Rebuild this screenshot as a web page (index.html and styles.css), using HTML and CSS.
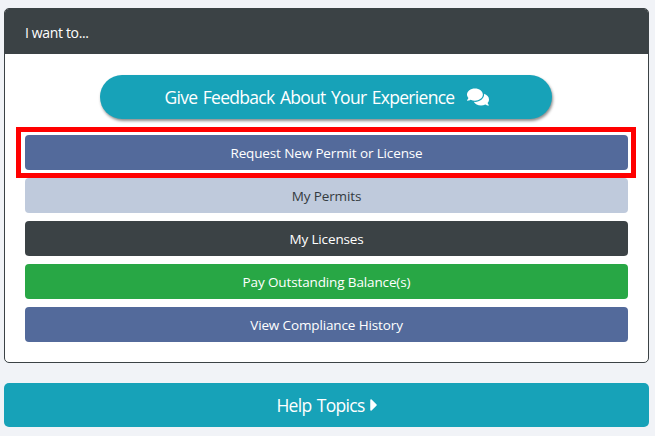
FILE: index.html
```html
<!DOCTYPE html>
<html lang="en">
<head>
    <meta charset="UTF-8">
    <meta name="viewport" content="width=device-width, initial-scale=1.0">
    <title>I want to...</title>
    <link rel="stylesheet" href="styles.css">
</head>
<body>
    <div class="card">
        <div class="card-header">I want to...</div>
        <div class="card-body">
            <a class="btn-feedback" href="#">
                Give Feedback About Your Experience
                <svg class="icon-comments" viewBox="0 0 576 512"><path fill="currentColor" d="M416 192c0-88.400-93.100-160-208-160S0 103.600 0 192c0 34.300 14.100 65.900 38 92-13.400 30.200-35.500 54.200-35.800 54.500-2.200 2.300-2.800 5.700-1.500 8.700S4.800 352 8 352c36.600 0 66.900-12.300 88.700-25 32.200 15.700 70.300 25 111.300 25 114.900 0 208-71.600 208-160zm122 220c23.900-26 38-57.700 38-92 0-66.900-53.500-124.200-129.300-148.100.9 6.600 1.300 13.300 1.300 20.100 0 105.900-107.700 192-240 192-10.800 0-21.300-.8-31.700-1.900C207.800 439.600 281.800 480 368 480c41 0 79.100-9.200 111.300-25 21.800 12.700 52.100 25 88.700 25 3.200 0 6.100-1.900 7.300-4.800 1.300-2.900.7-6.300-1.500-8.700-.3-.3-22.400-24.200-35.800-54.500z"/></svg>
            </a>
            <div class="btn-list">
                <div class="highlight-wrap">
                    <a class="btn btn-blue" href="#">Request New Permit or License</a>
                    <span class="highlight"></span>
                </div>
                <a class="btn btn-light" href="#">My Permits</a>
                <a class="btn btn-dark" href="#">My Licenses</a>
                <a class="btn btn-green" href="#">Pay Outstanding Balance(s)</a>
                <a class="btn btn-blue" href="#">View Compliance History</a>
            </div>
        </div>
    </div>

    <a class="btn-help" href="#">
        Help Topics
        <svg class="icon-caret" viewBox="0 0 192 512"><path fill="currentColor" d="M0 384.662V127.338c0-17.818 21.543-26.741 34.142-14.142l128.662 128.662c7.810 7.810 7.810 20.474 0 28.284L34.142 398.804C21.543 411.404 0 402.480 0 384.662z"/></svg>
    </a>
</body>
</html>
```
FILE: styles.css
```css
* {
    margin: 0;
    padding: 0;
    box-sizing: border-box;
    font-family: "Open Sans", "Noto Sans", Arial, sans-serif;
}

a {
    text-decoration: none;
}

body {
    background-color: #f1f3f7;
    padding: 8px 6px 9px 4px;
    height: 436px;
    overflow: hidden;
}

.card {
    height: 355px;
    background-color: #fff;
    border: 1px solid #3b4245;
    border-radius: 5px;
    overflow: hidden;
}

.card-header {
    height: 45px;
    background-color: #3b4245;
    color: #fff;
    font-size: 14px;
    letter-spacing: -0.35px;
    line-height: 47px;
    padding-left: 20px;
}

.card-body {
    padding: 21px 20px 0;
}

.btn-feedback {
    display: flex;
    align-items: center;
    justify-content: center;
    gap: 12px;
    width: 452px;
    height: 44px;
    margin-left: 75px;
    padding-left: 1px;
    background-color: #17a2b8;
    color: #fff;
    font-size: 17.5px;
    letter-spacing: -0.7px;
    word-spacing: 1.5px;
    border-radius: 22px;
    box-shadow: 1px 2px 3px rgba(0, 0, 0, 0.45);
}

.icon-comments {
    width: 22px;
    height: 20px;
}

.btn-list {
    display: flex;
    flex-direction: column;
    gap: 8px;
    margin-top: 16px;
}

.highlight-wrap {
    position: relative;
}

/* red annotation drawn over the first button */
.highlight {
    position: absolute;
    top: -8px;
    left: -9px;
    right: -8px;
    bottom: -8px;
    border: 5px solid #f00;
}

.btn {
    display: block;
    height: 35px;
    line-height: 37px;
    text-align: center;
    font-size: 13.5px;
    letter-spacing: -0.13px;
    border-radius: 4px;
    color: #fff;
}

.btn-blue {
    background-color: #536a9b;
}

.btn-light {
    background-color: #bfcadc;
    color: #343a40;
}

.btn-dark {
    background-color: #3b4245;
}

.btn-green {
    background-color: #28a745;
}

.btn-help {
    display: flex;
    align-items: center;
    justify-content: center;
    gap: 5px;
    height: 44px;
    margin-top: 20px;
    padding-left: 1px;
    background-color: #17a2b8;
    color: #fff;
    font-size: 17.5px;
    letter-spacing: -0.7px;
    word-spacing: 1.5px;
    border-radius: 5px;
}

.icon-caret {
    width: 8px;
    height: 20px;
}
```
